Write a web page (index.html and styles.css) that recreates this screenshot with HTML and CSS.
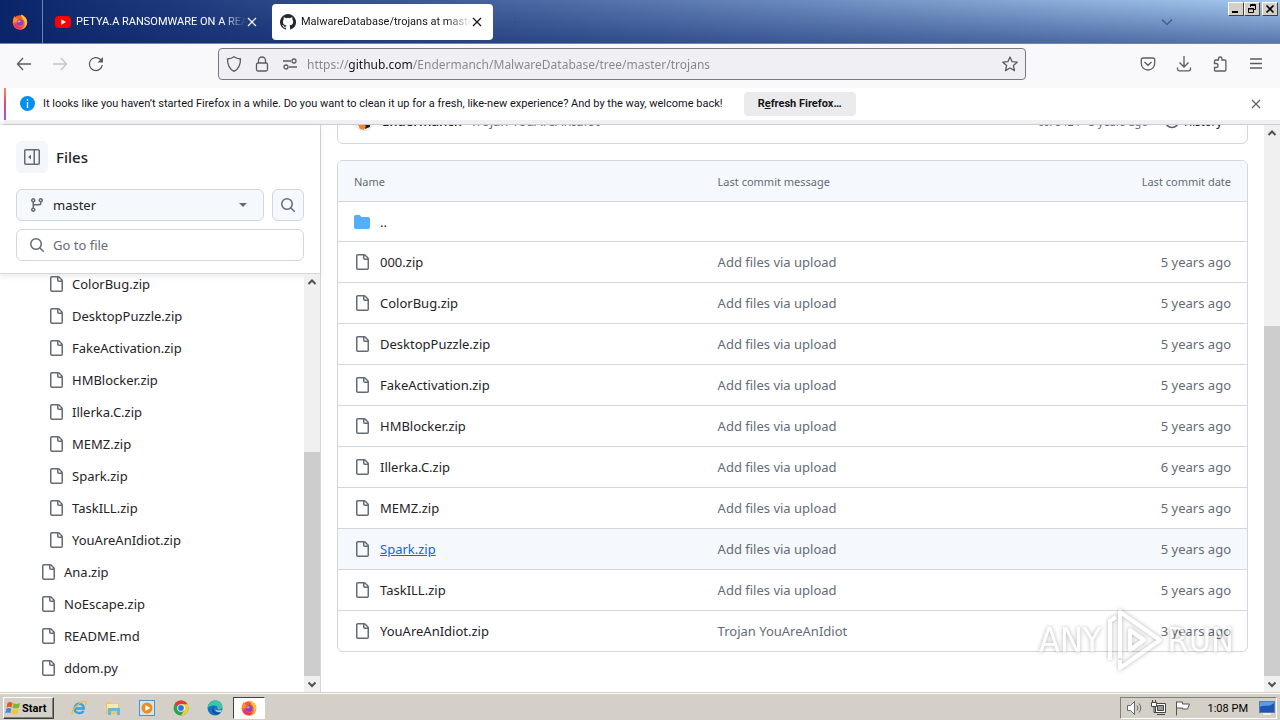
FILE: index.html
```html
<!DOCTYPE html>
<html lang="en">
<head>
    <meta charset="UTF-8">
    <meta name="viewport" content="width=device-width, initial-scale=1.0">
    <title>MalwareDatabase/trojans at master</title>
    <link rel="stylesheet" href="styles.css">
</head>
<body>
    <!-- shared icons -->
    <svg class="sprite" aria-hidden="true">
        <symbol id="i-file" viewBox="0 0 16 16"><path d="M2 1.75C2 .784 2.784 0 3.75 0h6.586c.464 0 .909.184 1.237.513l2.914 2.914c.329.328.513.773.513 1.237v9.586A1.75 1.75 0 0 1 13.25 16h-9.5A1.75 1.75 0 0 1 2 14.25Zm1.75-.25a.25.25 0 0 0-.25.25v12.5c0 .138.112.25.25.25h9.5a.25.25 0 0 0 .25-.25V6h-2.75A1.75 1.75 0 0 1 9 4.25V1.5Zm6.75.062V4.25c0 .138.112.25.25.25h2.688l-.011-.013-2.914-2.914-.013-.011Z"/></symbol>
        <symbol id="i-folder" viewBox="0 0 16 16"><path d="M1.75 1A1.75 1.75 0 0 0 0 2.75v10.5C0 14.216.784 15 1.75 15h12.5A1.75 1.75 0 0 0 16 13.25v-8.5A1.75 1.75 0 0 0 14.25 3H7.5a.25.25 0 0 1-.2-.1l-.9-1.2C6.07 1.26 5.55 1 5 1H1.75Z"/></symbol>
        <symbol id="i-search" viewBox="0 0 16 16"><path d="M10.68 11.74a6 6 0 0 1-7.922-8.982 6 6 0 0 1 8.982 7.922l3.04 3.04a.749.749 0 1 1-1.06 1.06l-3.04-3.04ZM11.5 7a4.499 4.499 0 1 0-8.997 0A4.499 4.499 0 0 0 11.5 7Z"/></symbol>
        <symbol id="i-branch" viewBox="0 0 16 16"><path d="M9.5 3.25a2.25 2.25 0 1 1 3 2.122V6A2.5 2.5 0 0 1 10 8.5H6a1 1 0 0 0-1 1v1.128a2.251 2.251 0 1 1-1.5 0V5.372a2.25 2.25 0 1 1 1.5 0v1.836A2.493 2.493 0 0 1 6 7h4a1 1 0 0 0 1-1v-.628A2.25 2.25 0 0 1 9.5 3.25Zm-6 0a.75.75 0 1 0 1.5 0 .75.75 0 0 0-1.5 0Zm8.25-.75a.75.75 0 1 0 0 1.5.75.75 0 0 0 0-1.5ZM4.25 12a.75.75 0 1 0 0 1.5.75.75 0 0 0 0-1.5Z"/></symbol>
        <symbol id="i-panel" viewBox="0 0 16 16"><path d="M0 1.75C0 .784.784 0 1.75 0h12.5C15.216 0 16 .784 16 1.75v12.5A1.75 1.75 0 0 1 14.25 16H1.75A1.75 1.75 0 0 1 0 14.25Zm1.5 0v12.5c0 .138.112.25.25.25H9.5v-13H1.75a.25.25 0 0 0-.25.25ZM11 14.5h3.25a.25.25 0 0 0 .25-.25V1.75a.25.25 0 0 0-.25-.25H11Zm-4-9v5L4 8Z"/></symbol>
        <symbol id="i-close" viewBox="0 0 12 12"><path d="M2 2l8 8M10 2l-8 8" fill="none" stroke="currentColor" stroke-width="1.2"/></symbol>
        <symbol id="i-up" viewBox="0 0 16 16"><path d="M4.500 10L8 6.500l3.500 3.500" fill="none" stroke="#505050" stroke-width="2"/></symbol>
        <symbol id="i-down" viewBox="0 0 16 16"><path d="M4.500 6.500L8 10l3.500-3.500" fill="none" stroke="#505050" stroke-width="2"/></symbol>
        <symbol id="i-firefox" viewBox="0 0 16 16">
            <circle cx="8" cy="8.500" r="7.300" fill="#ff5a2e"/>
            <path d="M9 .5c3 1 6.500 4 6 8.500-.5 4-4 6.500-7.500 6.500 4-1 6-4 5-7.500C12 5 9 4 9 .5Z" fill="#ffc533"/>
            <path d="M1.200 5L2.500 2 4 4.500l3 .5-2 2.500L1 9Z" fill="#ff8f24"/>
            <path d="M2 11c2 4 7 5 10 2-3 1-7 0-8-4Z" fill="#f2257f"/>
            <circle cx="8" cy="8.500" r="3.200" fill="#7a45d8"/>
            <path d="M5 8c1-2 3-2 4-1L7.500 8.500Z" fill="#ff9a27"/>
        </symbol>
    </svg>

    <header class="titlebar">
        <div class="pinned"><svg width="16" height="16"><use href="#i-firefox"/></svg></div>
        <div class="tabs">
            <div class="tab">
                <svg class="fav" viewBox="0 0 16 16"><rect y="2" width="16" height="12" rx="3.500" fill="#f00"/><path d="M6.300 5.300v5.400L11 8Z" fill="#fff"/></svg>
                <span class="tab-title">PETYA.A RANSOMWARE ON A REAL PC</span>
                <button class="bare" aria-label="Close tab"><svg width="12" height="12"><use href="#i-close"/></svg></button>
            </div>
            <div class="tab active">
                <svg class="fav" viewBox="0 0 16 16"><path fill="#24292f" d="M8 0a8 8 0 0 0-2.530 15.590c.4.070.55-.17.55-.38v-1.490c-2.010.37-2.530-.49-2.690-.94-.09-.23-.48-.94-.82-1.130-.28-.15-.68-.52-.01-.53.63-.01 1.080.58 1.230.82.72 1.210 1.870.87 2.330.66.07-.52.28-.87.51-1.070-1.780-.2-3.640-.89-3.640-3.950 0-.87.31-1.590.82-2.150-.08-.2-.36-1.020.08-2.120 0 0 .67-.21 2.200.82a7.600 7.600 0 0 1 4 0c1.530-1.040 2.200-.82 2.200-.82.44 1.100.16 1.920.08 2.120.51.56.82 1.270.82 2.150 0 3.070-1.870 3.750-3.650 3.950.29.25.54.73.54 1.480v2.200c0 .21.15.46.55.38A8 8 0 0 0 8 0Z"/></svg>
                <span class="tab-title">MalwareDatabase/trojans at master</span>
                <button class="bare" aria-label="Close tab"><svg width="12" height="12"><use href="#i-close"/></svg></button>
            </div>
            <button class="bare new-tab" aria-label="New tab"><svg width="12" height="12" viewBox="0 0 12 12"><path d="M6 1v10M1 6h10" stroke="currentColor"/></svg></button>
        </div>
        <button class="bare all-tabs" aria-label="List all tabs"><svg width="14" height="14" viewBox="0 0 14 14" fill="none" stroke="currentColor" stroke-width="1.300"><path d="M2 4.500l5 5 5-5"/></svg></button>
        <div class="window-buttons">
            <button aria-label="Minimize"><svg viewBox="0 0 12 10"><path d="M2 8h6" stroke="#000" stroke-width="2"/></svg></button>
            <button aria-label="Restore"><svg viewBox="0 0 12 10" fill="none" stroke="#000"><path d="M4.500 3V.5h5v5H8M4 1.500h6M2.500 4.500h5v4h-5zM2 5h6"/></svg></button>
            <button class="close" aria-label="Close"><svg viewBox="0 0 12 10"><path d="M2.500 1.500l7 7M9.500 1.500l-7 7" stroke="#000" stroke-width="1.700"/></svg></button>
        </div>
    </header>

    <nav class="toolbar">
        <div class="nav-buttons">
            <button class="bare" aria-label="Back"><svg width="16" height="16" viewBox="0 0 16 16"><path d="M15 8H1.500M7 2L1.500 8 7 14"/></svg></button>
            <button class="bare" aria-label="Forward" disabled><svg width="16" height="16" viewBox="0 0 16 16"><path d="M1 8h13.500M9 2l5.500 6L9 14"/></svg></button>
            <button class="bare" aria-label="Reload"><svg width="16" height="16" viewBox="0 0 16 16"><path d="M14.300 9A6.500 6.500 0 1 1 12.500 3.500L14 5"/><path d="M15 1v5.500H9.500Z" fill="#5b5b66" stroke="none"/></svg></button>
        </div>
        <div class="urlbar">
            <svg width="16" height="16" viewBox="0 0 16 16"><path d="M8 .8c2 1.500 4.300 2 6.500 2.200 0 5.500-1.500 10-6.500 12.300C3 13 1.500 8.500 1.500 3 3.700 2.800 6 2.300 8 .8Z"/></svg>
            <svg width="16" height="16" viewBox="0 0 16 16"><rect x="2.500" y="7" width="11" height="8" rx="1.500"/><path d="M4.500 7V4.500a3.500 3.500 0 0 1 7 0V7"/></svg>
            <svg width="16" height="16" viewBox="0 0 16 16"><path d="M1 5h8M7 11h8"/><circle cx="12" cy="5" r="2"/><circle cx="4" cy="11" r="2"/></svg>
            <input class="url" type="text" aria-label="Address" value="https://github.com/Endermanch/MalwareDatabase/tree/master/trojans">
            <button class="bare" aria-label="Bookmark this page"><svg width="16" height="16" viewBox="0 0 16 16"><path d="M8 1l2.100 4.700 5.100.5-3.800 3.400 1.100 5L8 12l-4.500 2.600 1.100-5L.8 6.200l5.100-.5Z" stroke-linejoin="round"/></svg></button>
        </div>
        <div class="tools">
            <button class="bare" aria-label="Save to Pocket"><svg width="16" height="16" viewBox="0 0 16 16"><path d="M3 2h10a1.700 1.700 0 0 1 1.700 1.700V7.500a6.700 6.500 0 0 1-13.400 0V3.700A1.700 1.700 0 0 1 3 2ZM4.500 6L8 9.300 11.500 6"/></svg></button>
            <button class="bare" aria-label="Downloads"><svg width="16" height="16" viewBox="0 0 16 16"><path d="M8 0v11M3.500 6.500L8 11l4.500-4.500M1.500 11.500v1.500A1.800 1.800 0 0 0 3.300 14.800h9.400a1.800 1.800 0 0 0 1.800-1.800v-1.500"/></svg></button>
            <button class="bare" aria-label="Extensions"><svg width="16" height="16" viewBox="0 0 16 16"><path d="M2.500 7.500V5a1 1 0 0 1 1-1h3V2.700a1.700 1.700 0 0 1 3.400 0V4h3a1 1 0 0 1 1 1v9a1 1 0 0 1-1 1H3.500a1 1 0 0 1-1-1v-2.500H4a2 2 0 0 0 0-4Z"/></svg></button>
            <button class="bare" aria-label="Menu"><svg width="16" height="16" viewBox="0 0 16 16"><path d="M2 3h12M2 7.500h12M2 12h12"/></svg></button>
        </div>
    </nav>

    <div class="notice">
        <svg width="15" height="15" viewBox="0 0 15 15"><circle cx="7.500" cy="7.500" r="7.500" fill="#0090ed"/><path d="M7.500 3v1.700M7.500 6v6" stroke="#fff" stroke-width="1.300"/></svg>
        <span class="notice-text">It looks like you haven’t started Firefox in a while. Do you want to clean it up for a fresh, like-new experience? And by the way, welcome back!</span>
        <button class="refresh">R<u>e</u>fresh Firefox…</button>
        <button class="bare dismiss" aria-label="Dismiss"><svg width="12" height="12"><use href="#i-close"/></svg></button>
    </div>

    <div class="page">
        <aside class="sidebar">
            <div class="sidebar-head">
                <div class="head-row">
                    <button class="icon-btn plain" aria-label="Collapse file tree"><svg width="16" height="16"><use href="#i-panel"/></svg></button>
                    <h2>Files</h2>
                </div>
                <div class="head-row">
                    <label class="branch">
                        <svg width="16" height="16"><use href="#i-branch"/></svg>
                        <select aria-label="Branch"><option>master</option></select>
                        <svg width="8" height="4" viewBox="0 0 8 4"><path d="M0 0h8L4 4Z"/></svg>
                    </label>
                    <button class="icon-btn" aria-label="Search this repository"><svg width="16" height="16"><use href="#i-search"/></svg></button>
                </div>
                <label class="go-to">
                    <svg width="16" height="16"><use href="#i-search"/></svg>
                    <input type="text" placeholder="Go to file" aria-label="Go to file">
                </label>
            </div>
            <div class="tree-wrap">
                <ul class="tree">
                    <li class="nested"><svg><use href="#i-file"/></svg><a href="#">ColorBug.zip</a></li>
                    <li class="nested"><svg><use href="#i-file"/></svg><a href="#">DesktopPuzzle.zip</a></li>
                    <li class="nested"><svg><use href="#i-file"/></svg><a href="#">FakeActivation.zip</a></li>
                    <li class="nested"><svg><use href="#i-file"/></svg><a href="#">HMBlocker.zip</a></li>
                    <li class="nested"><svg><use href="#i-file"/></svg><a href="#">Illerka.C.zip</a></li>
                    <li class="nested"><svg><use href="#i-file"/></svg><a href="#">MEMZ.zip</a></li>
                    <li class="nested"><svg><use href="#i-file"/></svg><a href="#">Spark.zip</a></li>
                    <li class="nested"><svg><use href="#i-file"/></svg><a href="#">TaskILL.zip</a></li>
                    <li class="nested"><svg><use href="#i-file"/></svg><a href="#">YouAreAnIdiot.zip</a></li>
                    <li><svg><use href="#i-file"/></svg><a href="#">Ana.zip</a></li>
                    <li><svg><use href="#i-file"/></svg><a href="#">NoEscape.zip</a></li>
                    <li><svg><use href="#i-file"/></svg><a href="#">README.md</a></li>
                    <li><svg><use href="#i-file"/></svg><a href="#">ddom.py</a></li>
                </ul>
                <div class="scrollbar tree-scroll">
                    <svg><use href="#i-up"/></svg>
                    <div class="track"><div class="thumb"></div></div>
                    <svg><use href="#i-down"/></svg>
                </div>
            </div>
        </aside>

        <main class="content">
            <div class="commit">
                <svg width="20" height="20" viewBox="0 0 20 20"><circle cx="10" cy="10" r="9.500" fill="#fff" stroke="#d8dee4"/><path d="M11 7l5 1v8l-5 2Z" fill="#222"/><path d="M4 14l5-1 3 2-2 4-4-1Z" fill="#f0842c"/></svg>
                <a class="author" href="#">Endermanch</a>
                <a class="message" href="#">Trojan YouAreAnIdiot</a>
                <span class="sha">cc78424 · 3 years ago</span>
                <a class="history" href="#"><svg width="16" height="16" viewBox="0 0 16 16"><circle cx="8" cy="8" r="6.500" fill="none" stroke="#57606a" stroke-width="1.500"/><path d="M8 4v4l3 1" fill="none" stroke="#57606a" stroke-width="1.500"/></svg>History</a>
            </div>
            <table class="files">
                <thead>
                    <tr><th class="name">Name</th><th class="msg">Last commit message</th><th class="date">Last commit date</th></tr>
                </thead>
                <tbody>
                    <tr class="parent"><td colspan="3"><div class="cell"><svg class="folder"><use href="#i-folder"/></svg><a href="#">..</a></div></td></tr>
                    <tr><td><div class="cell"><svg><use href="#i-file"/></svg><a href="#">000.zip</a></div></td><td>Add files via upload</td><td class="date">5 years ago</td></tr>
                    <tr><td><div class="cell"><svg><use href="#i-file"/></svg><a href="#">ColorBug.zip</a></div></td><td>Add files via upload</td><td class="date">5 years ago</td></tr>
                    <tr><td><div class="cell"><svg><use href="#i-file"/></svg><a href="#">DesktopPuzzle.zip</a></div></td><td>Add files via upload</td><td class="date">5 years ago</td></tr>
                    <tr><td><div class="cell"><svg><use href="#i-file"/></svg><a href="#">FakeActivation.zip</a></div></td><td>Add files via upload</td><td class="date">5 years ago</td></tr>
                    <tr><td><div class="cell"><svg><use href="#i-file"/></svg><a href="#">HMBlocker.zip</a></div></td><td>Add files via upload</td><td class="date">5 years ago</td></tr>
                    <tr><td><div class="cell"><svg><use href="#i-file"/></svg><a href="#">Illerka.C.zip</a></div></td><td>Add files via upload</td><td class="date">6 years ago</td></tr>
                    <tr><td><div class="cell"><svg><use href="#i-file"/></svg><a href="#">MEMZ.zip</a></div></td><td>Add files via upload</td><td class="date">5 years ago</td></tr>
                    <tr class="hovered"><td><div class="cell"><svg><use href="#i-file"/></svg><a href="#">Spark.zip</a></div></td><td>Add files via upload</td><td class="date">5 years ago</td></tr>
                    <tr><td><div class="cell"><svg><use href="#i-file"/></svg><a href="#">TaskILL.zip</a></div></td><td>Add files via upload</td><td class="date">5 years ago</td></tr>
                    <tr><td><div class="cell"><svg><use href="#i-file"/></svg><a href="#">YouAreAnIdiot.zip</a></div></td><td>Trojan YouAreAnIdiot</td><td class="date">3 years ago</td></tr>
                </tbody>
            </table>
        </main>
        <div class="scrollbar page-scroll">
            <svg><use href="#i-up"/></svg>
            <div class="track"><div class="thumb"></div></div>
            <svg><use href="#i-down"/></svg>
        </div>

        <div class="watermark">
            <span>ANY</span>
            <svg width="60" height="64" viewBox="0 0 60 64" fill="none" stroke="#fff" stroke-width="4" stroke-linejoin="round"><path d="M6 52V13l6-4M16 50V4l40 28-40 28v-8M26 22v20l14-10Z"/></svg>
            <span>RUN</span>
        </div>
    </div>

    <footer class="taskbar">
        <button class="start">
            <svg width="16" height="16" viewBox="0 0 16 16"><path d="M2.500 3c2-1.500 3.500-1 5 0l-1 4.500c-1.500-1-3-1-5 0Z" fill="#e8542a"/><path d="M8.500 3.300c2 1 4 1 6.500-.3l-1 4.500c-2 1.200-4 1.200-6.400.3Z" fill="#7cb82f"/><path d="M1.300 8.700c2-1 3.500-1 5 0l-1 4.500c-1.500-1-3-1-5 0Z" fill="#3d8ad8"/><path d="M7.300 9c2 1 4 1 6.400-.2l-1 4.500c-2 1.200-4 1.200-6.400.2Z" fill="#f7c52d"/></svg>
            Start
        </button>
        <div class="apps">
            <button aria-label="Internet Explorer"><svg viewBox="0 0 16 16" fill="none"><path d="M3.500 8.500h9.300C13 2.500 4 2 3.500 8.500c0 5 6.500 6 9 2.500" stroke="#35a4e0" stroke-width="2.400"/><path d="M1.500 14.500C-1 11 9 1 14 1.500c2 .3 1 3 .3 4" stroke="#eebc3a" stroke-width="1.200"/></svg></button>
            <button aria-label="Explorer"><svg viewBox="0 0 16 16"><path d="M1 2h5l1 1.500h7V14H1Z" fill="#ecc766"/><path d="M2 4h11v5H2Z" fill="#fbeaa8"/><path d="M3 8h12v7h-3v-4H6v4H3Z" fill="#68b8de"/></svg></button>
            <button aria-label="Media Player"><svg viewBox="0 0 16 16"><rect x=".5" y=".5" width="15" height="15" fill="#d2e5f3" stroke="#4a94c9"/><circle cx="8" cy="8" r="5.500" fill="#f08a1c"/><path d="M6.300 5v6l5-3Z" fill="#fff"/></svg></button>
            <button aria-label="Chrome"><svg viewBox="0 0 16 16"><circle cx="8" cy="8" r="7.500" fill="#2fa24f"/><path d="M8 8L1.500 4.300A7.500 7.500 0 0 1 14.500 4.300H8Z" fill="#e33b2e"/><path d="M8 4.300h6.500A7.500 7.500 0 0 1 8 15.500l3.300-5.600Z" fill="#fcc934"/><circle cx="8" cy="8" r="3.800" fill="#fff"/><circle cx="8" cy="8" r="2.900" fill="#2f72e8"/></svg></button>
            <button aria-label="Edge"><svg viewBox="0 0 16 16"><circle cx="8" cy="8" r="7.500" fill="#1673c4"/><path d="M.6 8C1 3 4.500.5 8.500.5c4 0 7 2.500 7 6C15.500 9 13 10 10.500 9.500c.8-2.500-1-4-3.500-4C4 5.500 1.500 6.500.6 8Z" fill="#3bc5a6"/><path d="M7 7c-2 3 1 7 7 5-3 4-9 3-9-2 0-1.500 1-2.700 2-3Z" fill="#0d4f9c"/><path d="M9 7.500c-2 2 1 4 6 2.500l-1 2c-4 1-7-1.500-5-4.500Z" fill="#d4d0c8"/></svg></button>
            <button class="running" aria-label="Firefox"><svg><use href="#i-firefox"/></svg></button>
        </div>
        <div class="tray">
            <svg width="18" height="16" viewBox="0 0 18 16" fill="none" stroke="#666"><path d="M1.500 5.500h3l4-4v13l-4-4h-3Z" fill="#fff"/><path d="M11 5.500q2 2.500 0 5M13 3.500q3.500 4.500 0 9"/></svg>
            <svg width="18" height="16" viewBox="0 0 18 16" stroke="#444"><path d="M5.500 3.500h10v9h-10z" fill="#fff"/><path d="M7.500 5.500h6v5h-6z" fill="#999"/><path d="M7 14.500h8" fill="none"/><path d="M1.500 2.500h5v4h-5zM2.500 0v2M5.500 0v2" fill="#fff"/><path d="M4 7v5.500h2" fill="none"/></svg>
            <svg width="18" height="16" viewBox="0 0 18 16" stroke="#555" fill="#fff"><path d="M2.500 15.500v-14M2.500 2h6v2h7l-2 5H8.500V8h-6Z"/></svg>
            <span class="clock">1:08 PM</span>
            <svg width="16" height="14" viewBox="0 0 16 14"><rect x=".5" y=".5" width="15" height="11" fill="#1e56b4" stroke="#5a7fb0"/><path d="M1 6C5 3 9 7 15 2V1H1Z" fill="#5d9ae6"/><path d="M4 13h8" stroke="#eee" stroke-width="2"/></svg>
        </div>
    </footer>
</body>
</html>
```
FILE: styles.css
```css
* {
    box-sizing: border-box;
}

body {
    margin: 0;
    height: 100vh;
    display: flex;
    flex-direction: column;
    overflow: hidden;
    background: #fff;
    color: #1f2328;
    font-family: "Noto Sans", sans-serif;
    font-size: 13px;
}

svg {
    flex: none;
}

a {
    color: inherit;
    text-decoration: none;
}

button,
input,
select {
    font: inherit;
    color: inherit;
}

.sprite {
    display: none;
}

.bare {
    display: flex;
    padding: 0;
    border: none;
    background: none;
}

.titlebar,
.notice,
.taskbar {
    font-family: Roboto, sans-serif;
    font-size: 11px;
}

/* Title bar */
.titlebar {
    display: flex;
    height: 44px;
    flex: none;
    border-bottom: 1px solid #76849c;
    background: linear-gradient(to bottom, rgba(10, 36, 106, 0), rgba(10, 36, 106, 0.5)), linear-gradient(to right, #0a246a, #a6caf0);
    color: #fff;
}

.pinned {
    display: flex;
    align-items: center;
    justify-content: center;
    width: 43px;
    padding-right: 2px;
    border-right: 1px solid #6f83b0;
}

.tabs {
    display: flex;
    flex: 1;
    align-items: center;
}

.tab {
    display: flex;
    align-items: center;
    width: 221px;
    height: 36px;
    padding: 0 10px 0 8px;
    border-radius: 4px;
}

.tab:first-child {
    margin: 0 4px;
}

.tab.active {
    background: #fff;
    color: #15141a;
}

.fav {
    width: 16px;
    height: 16px;
}

.tab-title {
    flex: 1;
    margin-left: 5px;
    overflow: hidden;
    white-space: nowrap;
    -webkit-mask-image: linear-gradient(to left, transparent, #000 24px);
    mask-image: linear-gradient(to left, transparent, #000 24px);
}

.new-tab {
    margin-left: 16px;
    color: #34518c;
}

.all-tabs {
    align-self: center;
    margin-right: 54px;
    color: #3d5c92;
}

.window-buttons {
    display: flex;
    align-items: flex-start;
    padding: 2px 2px 0 0;
}

.window-buttons button {
    display: flex;
    width: 16px;
    height: 14px;
    padding: 1px;
    border: 1px solid;
    border-color: #fff #404040 #404040 #fff;
    background: #d4d0c8;
}

.window-buttons .close {
    margin-left: 2px;
}

/* Navigation toolbar */
.toolbar {
    display: flex;
    align-items: center;
    height: 44px;
    padding: 0 16px 4px;
    flex: none;
    background: #f9f9fb;
}

.toolbar svg {
    fill: none;
    stroke: #5b5b66;
    stroke-width: 1.3;
}

.toolbar button:disabled {
    opacity: 0.35;
}

.nav-buttons,
.tools {
    display: flex;
    gap: 20px;
    flex: 1;
}

.tools {
    justify-content: flex-end;
    margin-left: 36px;
}

.urlbar {
    display: flex;
    align-items: center;
    gap: 12px;
    width: 808px;
    height: 32px;
    padding: 0 7px;
    border: 1px solid #77777f;
    border-radius: 4px;
    background: #f0f0f4;
}

/* host name is darker than the rest of the address */
.url {
    flex: 1;
    min-width: 0;
    margin-left: -3px;
    padding: 0;
    border: none;
    outline: none;
    background: linear-gradient(to right, #85858c 41px, #15141a 41px, #15141a 106px, #85858c 106px);
    -webkit-background-clip: text;
    background-clip: text;
    color: transparent;
    font-size: 12px;
}

/* Notification */
.notice {
    display: flex;
    align-items: center;
    flex: none;
    height: 37px;
    padding: 0 18px 5px 16px;
    border-left: 4px solid #f9f9fb;
    border-bottom: 1px solid #ccccd0;
    background: linear-gradient(#ff8a50, #e0457b, #9059ff) 0 0 / 2px 32px no-repeat, linear-gradient(#fff, #fff) 0 0 / 100% 32px no-repeat, #f0f0f4;
    color: #15141a;
}

.notice-text {
    margin: 0 21px 0 8px;
    white-space: nowrap;
}

.refresh {
    width: 112px;
    height: 24px;
    padding: 0;
    border: none;
    border-radius: 4px;
    background: #ebebed;
    font-weight: 700;
}

.dismiss {
    margin-left: auto;
    color: #5b5b66;
}

/* Page area */
.page {
    position: relative;
    display: flex;
    flex: 1;
    min-height: 0;
}

.sidebar {
    display: flex;
    flex-direction: column;
    flex: none;
    width: 321px;
    border-right: 1px solid #d0d7de;
}

.sidebar-head {
    display: flex;
    flex-direction: column;
    gap: 8px;
    padding: 16px 16px 12px;
    border-bottom: 1px solid #d0d7de;
    box-shadow: 0 2px 6px rgba(31, 35, 40, 0.1);
}

.head-row {
    display: flex;
    align-items: center;
    gap: 8px;
}

.head-row:first-child {
    margin-bottom: 8px;
}

h2 {
    margin: 0;
    font-size: 15px;
    font-weight: 500;
    line-height: 32px;
}

.sidebar svg,
.files svg {
    fill: #636c76;
}

.icon-btn {
    display: flex;
    align-items: center;
    justify-content: center;
    width: 32px;
    height: 32px;
    padding: 0;
    border: 1px solid #d0d7de;
    border-radius: 6px;
    background: #f5f8fc;
}

.icon-btn.plain {
    border-color: #f3f6fa;
    background: #f3f6fa;
}

.branch,
.go-to {
    display: flex;
    align-items: center;
    gap: 8px;
    flex: 1;
    height: 32px;
    padding: 0 16px 0 12px;
    border: 1px solid #d0d7de;
    border-radius: 6px;
    background: #f5f8fc;
}

.go-to {
    flex: none;
    background: #fff;
}

.branch select,
.go-to input {
    flex: 1;
    min-width: 0;
    padding: 0;
    border: none;
    outline: none;
    background: none;
    appearance: none;
}

.go-to input::placeholder {
    color: #636c76;
}

.tree-wrap {
    display: flex;
    flex: 1;
    min-height: 0;
    overflow: hidden;
}

/* list is scrolled down a little */
.tree {
    flex: 1;
    margin: -6px 0 0;
    padding: 0;
    list-style: none;
}

.tree li {
    display: flex;
    align-items: center;
    gap: 8px;
    height: 32px;
    padding-left: 40px;
}

.tree .nested {
    padding-left: 48px;
}

.tree svg,
.files svg {
    width: 16px;
    height: 16px;
}

/* Scrollbars */
.scrollbar {
    display: flex;
    flex-direction: column;
    flex: none;
    width: 16px;
    background: #f0f0f0;
}

.scrollbar svg {
    width: 16px;
    height: 16px;
}

.track {
    display: flex;
    flex: 1;
    align-items: flex-end;
}

.thumb {
    width: 100%;
    background: #cdcdcd;
}

.tree-scroll .thumb {
    height: 58%;
}

.page-scroll .thumb {
    height: 65.4%;
}

/* Main column */
.content {
    flex: 1;
    min-width: 0;
    padding: 0 16px;
    overflow: hidden;
}

.commit {
    display: flex;
    align-items: center;
    gap: 8px;
    height: 46px;
    margin: -27px 0 16px;
    padding: 0 25px 0 16px;
    border: 1px solid #d0d7de;
    border-radius: 6px;
}

.author {
    font-weight: 600;
}

.message,
.sha {
    color: #636c76;
}

.sha {
    margin-left: auto;
    font-size: 11px;
}

.history {
    display: flex;
    align-items: center;
    gap: 4px;
    margin-left: 8px;
    font-size: 11px;
    font-weight: 500;
}

.files {
    width: 100%;
    table-layout: fixed;
    border: 1px solid #d0d7de;
    border-radius: 6px;
    border-spacing: 0;
    overflow: hidden;
}

.files th {
    height: 40px;
    padding: 0 16px;
    background: #f5f8fc;
    color: #636c76;
    font-size: 11px;
    font-weight: 400;
    text-align: left;
}

.files .name {
    width: 40%;
}

.files .date {
    text-align: right;
}

.files td {
    height: 41px;
    padding: 0 16px;
    border-top: 1px solid #d0d7de;
    color: #636c76;
}

.files .parent td {
    height: 40px;
}

.files .hovered td {
    background: #f5f8fc;
}

.cell {
    display: flex;
    align-items: center;
    gap: 10px;
    color: #1f2328;
}

.files .folder {
    fill: #54aeff;
}

.hovered a {
    color: #0969da;
    text-decoration: underline;
}

/* Watermark laid over the page corner */
.watermark {
    position: absolute;
    right: 46px;
    bottom: 20px;
    display: flex;
    align-items: center;
    gap: 3px;
    color: #fff;
    font-family: "DejaVu Sans Condensed", sans-serif;
    font-size: 34px;
    opacity: 0.5;
    filter: drop-shadow(0 0 2px rgba(0, 0, 0, 0.6));
    pointer-events: none;
}

/* Taskbar */
.taskbar {
    display: flex;
    align-items: center;
    flex: none;
    height: 28px;
    padding: 3px 3px 0;
    border-top: 1px solid #d4d0c8;
    box-shadow: inset 0 1px #fff;
    background: #d4d0c8;
    color: #000;
}

.start {
    display: flex;
    align-items: center;
    gap: 1px;
    width: 51px;
    height: 22px;
    padding: 0 1px;
    border: 1px solid;
    border-color: #fff #404040 #404040 #fff;
    box-shadow: inset -1px -1px #808080;
    background: #d4d0c8;
    font-weight: 700;
}

.apps {
    display: flex;
    gap: 2px;
    margin-left: 9px;
}

.apps button {
    display: flex;
    align-items: center;
    justify-content: center;
    width: 32px;
    height: 22px;
    padding: 0;
    border: none;
    background: none;
}

.apps svg {
    width: 16px;
    height: 16px;
}

.apps .running {
    border: 1px solid;
    border-color: #404040 #fff #fff #404040;
    background: #fff;
}

.tray {
    display: flex;
    align-items: center;
    gap: 6px;
    height: 22px;
    margin-left: auto;
    padding: 0 1px 0 5px;
    border: 1px solid;
    border-color: #808080 #fff #fff #808080;
}

.clock {
    margin: 0 5px 0 10px;
}
```
